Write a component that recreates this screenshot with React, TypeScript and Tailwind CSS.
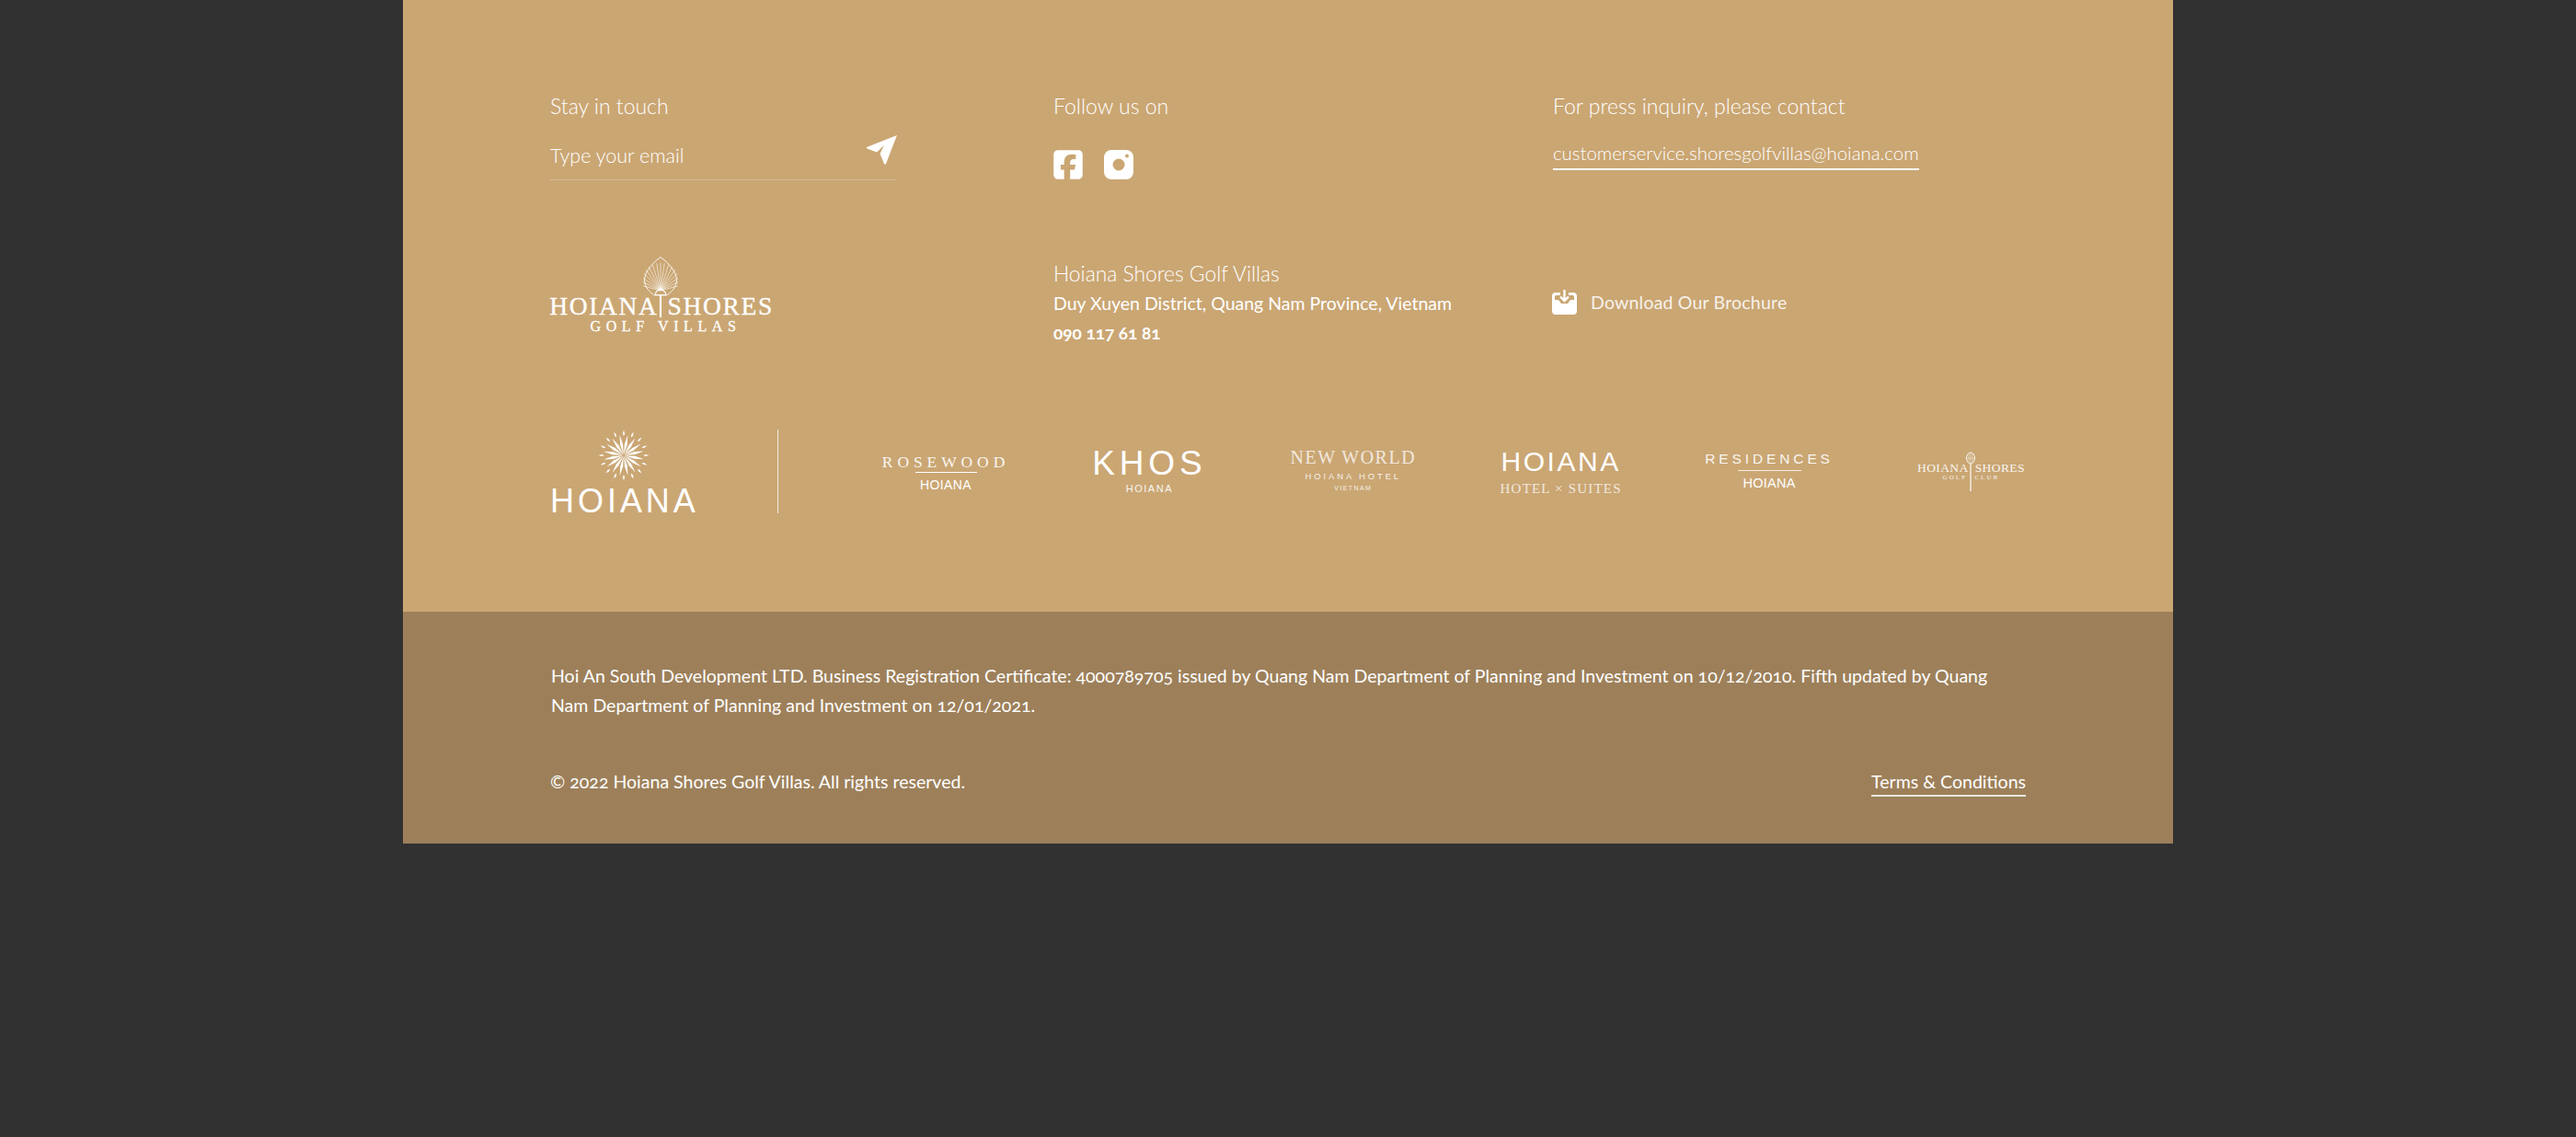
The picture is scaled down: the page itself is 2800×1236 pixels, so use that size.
import { FaSquareFacebook } from "react-icons/fa6";

const body = "font-['Lato','Open_Sans',sans-serif] [font-feature-settings:'onum'_1]";
const serif = "font-['Liberation_Serif',serif]";
const sans = "font-['Liberation_Sans',sans-serif]";

function Plane() {
  return (
    <svg viewBox="0 0 33 32" className="w-[33px] h-[32px]" fill="#fff">
      <path d="M33 0 L0 13 Q-0.5 14 0.5 14.5 L11 18.5 L19 11 L14.5 20 L19 31 Q20 32.5 21 31 Z" />
    </svg>
  );
}

function InstaIcon() {
  return (
    <svg viewBox="0 0 32 32" className="w-[32px] h-[32px]">
      <path
        fill="#fff"
        fillRule="evenodd"
        d="M8 0H24A8 8 0 0 1 32 8V24A8 8 0 0 1 24 32H8A8 8 0 0 1 0 24V8A8 8 0 0 1 8 0ZM16 9.5A6.5 6.5 0 1 0 16 22.5A6.5 6.5 0 1 0 16 9.5ZM25 4.5A2 2 0 1 0 25 8.5A2 2 0 1 0 25 4.5Z"
      />
    </svg>
  );
}

function DownloadIcon() {
  return (
    <svg viewBox="0 0 27 27" className="w-[27px] h-[27px]">
      <path
        fill="#fff"
        d="M4 3H9V6H4.500Q3 6 3 7.500V11H7L10 15H17L20 11H24V7.500Q24 6 22.500 6H18V3H23Q27 3 27 7V23Q27 27 23 27H4Q0 27 0 23V7Q0 3 4 3Z"
      />
      <path d="M13.500 0V11M9 7.500L13.500 12L18 7.500" stroke="#fff" strokeWidth="2.400" fill="none" />
    </svg>
  );
}

function Starburst() {
  const longRays = Array.from({ length: 16 }, (_, i) => (i * 360) / 16 + 11);
  const shortRays = Array.from({ length: 16 }, (_, i) => (i * 360) / 16);
  return (
    <svg viewBox="-30 -30 60 60" className="w-[58px] h-[56px]" fill="#fff">
      {longRays.map((a) => (
        <path key={a} d="M0 -1 L1.600 -13 L0 -24 L-1.600 -13 Z" transform={`rotate(${a})`} />
      ))}
      {shortRays.map((a) => (
        <path key={a} d="M0 -22.500 L1.100 -25.500 L0 -29.500 L-1.100 -25.500 Z" transform={`rotate(${a})`} />
      ))}
    </svg>
  );
}

function Leaf({ className }: { className: string }) {
  const fan = [-75, -64, -54, -44, -35, -26, -17, -8, 0, 8, 17, 26, 35, 44, 54, 64, 75];
  return (
    <svg viewBox="0 0 38 70" className={className} fill="none" stroke="#fff">
      <path d="M19 0.600C27 6 37 17 37 26C37 34 31 40 26 43H12C7 40 1 34 1 26C1 17 11 6 19 0.600Z" strokeWidth="0.900" />
      {fan.map((a) => (
        <path
          key={a}
          d={`M19 38 L${19 + Math.sin((a * Math.PI) / 180) * (17 + 14 * Math.cos((a * Math.PI) / 180))} ${38 - Math.cos((a * Math.PI) / 180) * (17 + 14 * Math.cos((a * Math.PI) / 180))}`}
          strokeWidth="0.600"
        />
      ))}
      <path d="M13 43A6 6 0 0 1 25 43Z" strokeWidth="1.200" />
      <path d="M19 43V68" strokeWidth="2.200" />
    </svg>
  );
}

function Racket({ className }: { className: string }) {
  return (
    <svg viewBox="0 0 12 44" className={className} fill="none" stroke="#fff">
      <ellipse cx="6" cy="7" rx="4.500" ry="6" strokeWidth="1" />
      <path d="M4 2V12M6 1V13M8 2V12M2 7H10" strokeWidth="0.500" />
      <path d="M6 13V43" strokeWidth="1.300" />
    </svg>
  );
}

function HoianaSub({ className }: { className: string }) {
  return <div className={`${sans} text-white leading-none ${className}`}>HOIANA</div>;
}

function PartnerLogos() {
  return (
    <div className="flex-1 ml-[115px] flex justify-between items-center text-white">
      <div className="w-[134px] flex flex-col items-center">
        <div className={`${serif} text-[17.500px] leading-[20px] tracking-[0.28em] whitespace-nowrap opacity-90`}>ROSEWOOD</div>
        <div className="w-[67px] h-px bg-white mt-[1px] mb-[6px]" />
        <HoianaSub className="text-[14px] tracking-[0.03em]" />
      </div>
      <div className="w-[124px] flex flex-col items-center">
        <div className={`${sans} text-[37px] leading-[32px] tracking-[0.13em] whitespace-nowrap`}>KHOS</div>
        <HoianaSub className="text-[11px] tracking-[0.14em] mt-[6px] opacity-90" />
      </div>
      <div className="w-[134px] flex flex-col items-center -mt-[2px]">
        <div className={`${serif} text-[20px] leading-[18px] tracking-[0.075em] whitespace-nowrap opacity-75`}>NEW WORLD</div>
        <div className={`${sans} text-[9.500px] leading-[10px] tracking-[0.3em] mt-[7px] whitespace-nowrap opacity-85`}>HOIANA HOTEL</div>
        <div className={`${sans} text-[7px] leading-[8px] tracking-[0.2em] mt-[4px] opacity-85`}>VIETNAM</div>
      </div>
      <div className="w-[133px] flex flex-col items-center">
        <HoianaSub className="text-[30px] tracking-[0.085em]" />
        <div className={`${serif} text-[15px] leading-[14px] mt-[7px] tracking-[0.08em] whitespace-nowrap opacity-75`}>HOTEL × SUITES</div>
      </div>
      <div className="w-[135px] flex flex-col items-center">
        <div className={`${sans} text-[15.500px] leading-[14px] tracking-[0.25em] whitespace-nowrap opacity-90`}>RESIDENCES</div>
        <div className="w-[69px] h-px bg-white/80 mt-[5px] mb-[6px]" />
        <HoianaSub className="text-[14.500px] tracking-[0.02em]" />
      </div>
      <div className="w-[119px] relative h-[44px] flex flex-col items-center justify-center opacity-90">
        <Racket className="absolute left-[53px] top-0 w-[12px] h-[44px]" />
        <div className={`${serif} text-[13.500px] leading-[12px] whitespace-nowrap flex gap-[7px] mt-[1px]`}>
          <span className="tracking-[0.03em]">HOIANA</span>
          <span className="tracking-[0.03em]">SHORES</span>
        </div>
        <div className={`${serif} text-[7px] leading-[8px] tracking-[0.3em] whitespace-nowrap flex gap-[8px]`}>
          <span>GOLF</span>
          <span>CLUB</span>
        </div>
      </div>
    </div>
  );
}

export default function App() {
  return (
    <div className={`min-h-[1236px] bg-[#313131] ${body} text-white font-light`}>
      <div className="w-[1924px] mx-auto">
        <section className="h-[665px] bg-[#caa673] px-[160px] pt-[100px]">
          <div className="grid grid-cols-[547px_544px_1fr] h-[96px]">
            <div>
              <h3 className="text-[23px] leading-[30px]">Stay in touch</h3>
              <div className="mt-[17px] w-[377px] h-[49px] border-b border-white/20 flex justify-between">
                <span className="text-[21.500px] leading-[44px]">Type your email</span>
                <Plane />
              </div>
            </div>
            <div>
              <h3 className="text-[23px] leading-[30px]">Follow us on</h3>
              <div className="mt-[33px] flex gap-[23px] items-center">
                <FaSquareFacebook className="w-[32px] h-[36px] -my-[2px] text-white" />
                <InstaIcon />
              </div>
            </div>
            <div className="-ml-[1px]">
              <h3 className="text-[23px] leading-[30px]">For press inquiry, please contact</h3>
              <a className="mt-[19px] inline-block text-[20.400px] leading-[34px] border-b-2 border-white whitespace-nowrap">
                customerservice.shoresgolfvillas@hoiana.com
              </a>
            </div>
          </div>

          <div className="grid grid-cols-[547px_544px_1fr] mt-[83px] h-[101px]">
            <div className="w-[242px] relative pt-[41px] flex flex-col items-center">
              <Leaf className="absolute left-[101px] top-0 w-[38px] h-[68px]" />
              <div className={`${serif} text-[27.500px] leading-[26px] whitespace-nowrap flex gap-[10px] [-webkit-text-stroke:0.3px_white]`}>
                <span className="tracking-[0.06em]">HOIANA</span>
                <span className="tracking-[0.06em]">SHORES</span>
              </div>
              <div className={`${serif} ml-[9px] text-[16px] leading-[18px] tracking-[0.35em] whitespace-nowrap [-webkit-text-stroke:0.3px_white]`}>GOLF VILLAS</div>
            </div>
            <div className="pt-[2px]">
              <div className="text-[22.800px] leading-[33px] whitespace-nowrap">Hoiana Shores Golf Villas</div>
              <div className="text-[19.500px] leading-[33px] font-normal whitespace-nowrap -mt-[1px]">Duy Xuyen District, Quang Nam Province, Vietnam</div>
              <div className="text-[19px] leading-[33px] font-bold -mt-[1px]">090 117 61 81</div>
            </div>
            <div className="self-start mt-[36px] -ml-[2px] flex items-center gap-[15px]">
              <DownloadIcon />
              <span className="text-[19.500px] leading-[27px] font-normal opacity-85 whitespace-nowrap tracking-[0.01em]">Download Our Brochure</span>
            </div>
          </div>

          <div className="mt-[87px] flex items-center h-[91px]">
            <div className="w-[247px] h-[91px] flex flex-col items-start">
              <div className="w-[160px] flex justify-center">
                <Starburst />
              </div>
              <div className={`${sans} mt-[9px] text-[36px] leading-[26px] tracking-[0.11em] text-white`}>HOIANA</div>
            </div>
            <div className="w-px h-[91px] bg-white/80" />
            <PartnerLogos />
          </div>
        </section>

        <section className="h-[252px] bg-[#9d805a] px-[160px] pt-[54px] text-[19.550px] leading-[32px] font-normal">
          <p className="pl-[1px] whitespace-nowrap">
            Hoi An South Development LTD. Business Registration Certificate: 4000789705 issued by Quang Nam Department of Planning and Investment on 10/12/2010. Fifth updated by Quang
            <br />
            Nam Department of Planning and Investment on 12/01/2021.
          </p>
          <div className="mt-[51px] flex justify-between items-start">
            <span>© 2022 Hoiana Shores Golf Villas. All rights reserved.</span>
            <a className="leading-[28px] mt-[2px] border-b-2 border-white/80">Terms &amp; Conditions</a>
          </div>
        </section>
      </div>
    </div>
  );
}
